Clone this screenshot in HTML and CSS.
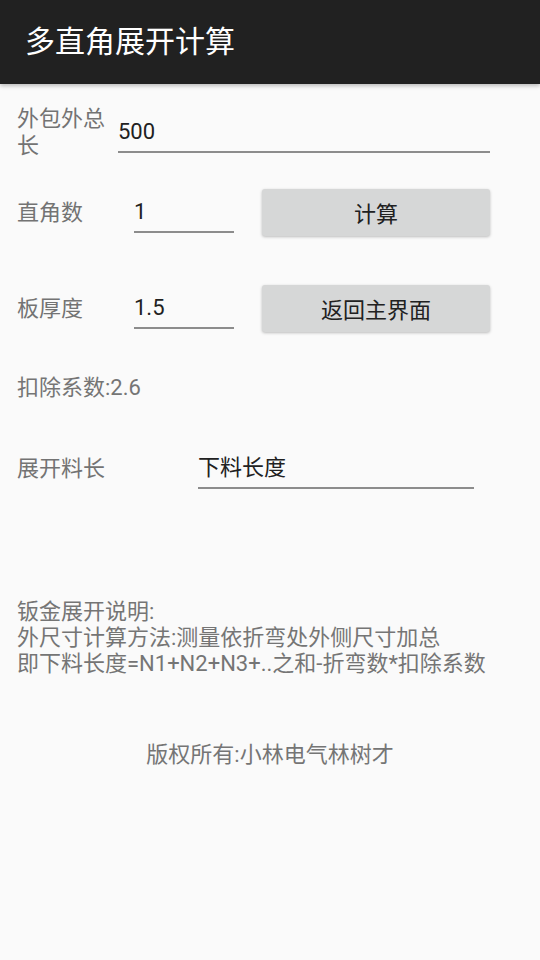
FILE: index.html
```html
<!DOCTYPE html>
<html lang="zh-CN">
<head>
    <meta charset="UTF-8">
    <meta name="viewport" content="width=device-width, initial-scale=1.0">
    <title>多直角展开计算</title>
    <link rel="stylesheet" href="styles.css">
</head>
<body>
    <header class="app-bar">
        <h1>多直角展开计算</h1>
    </header>
    <main class="content">
        <div class="row row-total">
            <label class="label label-total">外包外总长</label>
            <div class="field field-total">500</div>
        </div>
        <div class="row row-angles">
            <label class="label label-short">直角数</label>
            <div class="field field-small">1</div>
            <button class="btn">计算</button>
        </div>
        <div class="row row-thick">
            <label class="label label-short">板厚度</label>
            <div class="field field-small">1.5</div>
            <button class="btn">返回主界面</button>
        </div>
        <p class="factor">扣除系数:2.6</p>
        <div class="row row-result">
            <label class="label label-long">展开料长</label>
            <div class="field field-result">下料长度</div>
        </div>
        <div class="notes">
            <p>钣金展开说明:</p>
            <p>外尺寸计算方法:测量依折弯处外侧尺寸加总</p>
            <p>即下料长度=N1+N2+N3+..之和-折弯数*扣除系数</p>
        </div>
        <p class="copyright">版权所有:小林电气林树才</p>
    </main>
</body>
</html>
```

FILE: styles.css
```css
body {
    margin: 0;
    background: #fafafa;
    font-family: Roboto, "Noto Sans CJK SC", sans-serif;
    font-size: 22px;
    line-height: 26px;
    color: #757575;
    height: 960px;
    overflow: hidden;
}

.app-bar {
    height: 84px;
    background: #212121;
    display: flex;
    align-items: center;
    padding-left: 25px;
    box-shadow: 0 2px 4px rgba(0, 0, 0, 0.25);
    position: relative;
}

.app-bar h1 {
    margin: 0;
    font-size: 30px;
    font-weight: normal;
    line-height: 36px;
    color: #ffffff;
}

.content {
    padding: 0 17px;
}

.row {
    display: flex;
    align-items: center;
    height: 48px;
}

.row-total {
    margin-top: 16px;
    height: 64px;
}

.row-angles {
    margin-top: 24px;
}

.row-thick {
    margin-top: 48px;
}

.row-result {
    margin-top: 43px;
}

.label {
    flex: none;
    color: #737373;
    line-height: 27px;
}

.label-total {
    width: 92px;
    margin-right: 9px;
}

.label-short {
    width: 117px;
}

.label-long {
    width: 181px;
}

.field {
    flex: none;
    box-sizing: border-box;
    padding: 8px 0 6px;
    border-bottom: 2px solid #8c8c8c;
    color: #212121;
    line-height: 26px;
}

.field-total {
    width: 372px;
}

.field-small {
    width: 100px;
}

.field-result {
    width: 276px;
}

.btn {
    margin-left: 28px;
    width: 228px;
    height: 47px;
    border: none;
    border-radius: 3px;
    background: #d6d7d7;
    color: #212121;
    font-family: inherit;
    font-size: 22px;
    box-shadow: 0 1px 3px rgba(0, 0, 0, 0.25);
    padding: 0;
}

.factor {
    margin: 43px 0 0;
}

.notes {
    margin-top: 107px;
}

.notes p {
    margin: 0;
}

.copyright {
    margin: 65px 0 0;
    text-align: center;
}
```
